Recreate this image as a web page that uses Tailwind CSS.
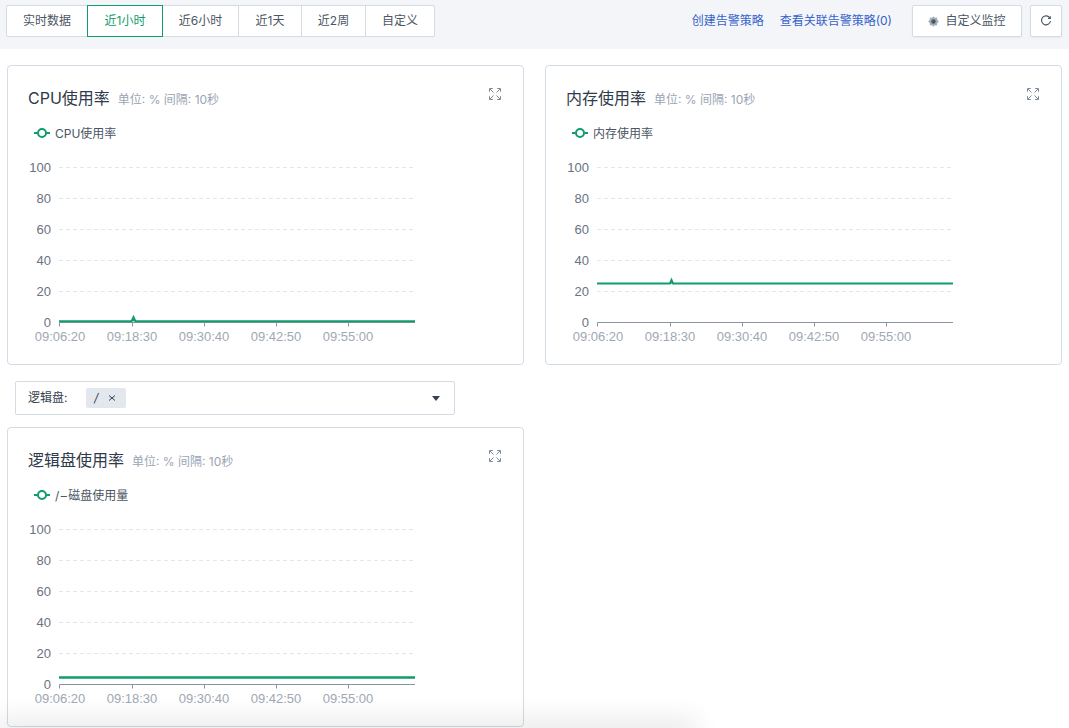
<!DOCTYPE html>
<html lang="zh">
  <head>
    <meta charset="utf-8" />
    <title>监控</title>
    <script src="https://cdn.jsdelivr.net/npm/@tailwindcss/browser@4"></script>
  </head>
  <body class="relative h-[728px] overflow-hidden bg-white text-[12px] text-[#4b5563] font-['Inter','Noto_Sans_CJK_SC',sans-serif]">
    <!-- toolbar -->
    <header class="flex h-[49px] items-start justify-between bg-[#f3f5f9] pl-[6px] pr-[7px] pt-[5px]">
      <div class="flex h-[32px] rounded-[2px] border border-[#d3dbe5] bg-white">
        <button class="w-[81px] border-r border-[#d3dbe5]">实时数据</button>
        <button class="-my-px -ml-px h-[32px] w-[76px] border border-[#0f9d6b] text-[#0f9d6b]">近1小时</button>
        <button class="w-[76px] border-r border-[#d3dbe5]">近6小时</button>
        <button class="w-[63px] border-r border-[#d3dbe5]">近1天</button>
        <button class="w-[64px] border-r border-[#d3dbe5]">近2周</button>
        <button class="w-[68px]">自定义</button>
      </div>
      <div class="flex h-[32px] items-center">
        <a class="text-[#3563c9]">创建告警策略</a>
        <a class="ml-[16px] text-[#3563c9]">查看关联告警策略(0)</a>
        <button class="ml-[20px] flex h-[32px] w-[110px] items-center justify-center gap-[6px] rounded-[2px] border border-[#d3dbe5] bg-white shadow-[0_1px_2px_rgba(0,0,0,0.05)]">
          <svg width="11" height="11" viewBox="0 0 10 10">
            <path d="M5 .2 6.300 1.500 8.200 1.400 8.400 3.300 9.800 5 8.400 6.700 8.200 8.600 6.300 8.500 5 9.800 3.700 8.500 1.800 8.600 1.600 6.700 .2 5 1.600 3.300 1.800 1.400 3.700 1.500Z" fill="#a3aebb" />
            <circle cx="5" cy="5" r="2" fill="#4b5563" />
          </svg>
          自定义监控
        </button>
        <button class="ml-[8px] flex h-[32px] w-[32px] items-center justify-center rounded-[2px] border border-[#d3dbe5] bg-white shadow-[0_1px_2px_rgba(0,0,0,0.05)]">
          <svg width="12" height="12" viewBox="0 0 12 12" fill="none" stroke="#4b5563" stroke-width="1.1">
            <path d="M10 3.200A4.500 4.500 0 1 0 10.500 6" />
            <path d="M10.300 1.200v2.300H8" />
          </svg>
        </button>
      </div>
    </header>

    <main class="grid grid-cols-[517px_517px] gap-x-[21px] px-[7px] pt-[16px]">
      <!-- CPU -->
      <section class="relative h-[300px] rounded-[4px] border border-[#d3dbe5] pl-[20px] pt-[22px]">
        <div class="flex h-[20px] items-center">
          <h2 class="text-[16px] text-[#2f3a4a]">CPU使用率</h2>
          <span class="ml-[8px] mt-[4px] text-[#9aa5b4]">单位: % 间隔: 10秒</span>
        </div>
        <svg class="absolute right-[22px] top-[22px]" width="12" height="12" viewBox="0 0 12 12" fill="none" stroke="#7f8b9a">
          <path d="M1 1 4.500 4.500M7.500 4.500 11 1M1 11 4.500 7.500M11 11 7.500 7.500" />
          <path d="M.5 3.800V.5h3.300M8.200 .5h3.300v3.300M.5 8.200v3.300h3.300M8.200 11.500h3.300V8.200" />
        </svg>
        <div class="ml-[6px] mt-[15px] flex h-[20px] items-center gap-[5px]">
          <svg width="16" height="10" viewBox="0 0 16 10" fill="none" stroke="#0f9d6b" stroke-width="2">
            <path d="M0 5h3.500M12.500 5H16" />
            <circle cx="8" cy="5" r="4" />
          </svg>
          <span class="pt-[2px]">CPU使用率</span>
        </div>
        <svg class="absolute left-0 top-[89px]" width="515" height="200" viewBox="8 155 515 200" font-size="13" font-family="Liberation Sans, sans-serif">
          <g stroke="#e1e7ef" stroke-dasharray="4 3">
            <path d="M59 167.500H415M59 198.500H415M59 229.500H415M59 260.500H415M59 291.500H415" />
          </g>
          <path d="M59.500 322.500H415M59.500 322.500v4M132.500 322.500v4M204.500 322.500v4M276.500 322.500v4M348.500 322.500v4" stroke="#8a94a3" fill="none" />
          <g fill="#6b7280" text-anchor="end">
            <text x="51" y="172">100</text><text x="51" y="203">80</text><text x="51" y="234">60</text>
            <text x="51" y="265">40</text><text x="51" y="296">20</text><text x="51" y="327">0</text>
          </g>
          <g fill="#a0a8b4" text-anchor="middle">
            <text x="60" y="341">09:06:20</text><text x="132" y="341">09:18:30</text><text x="204" y="341">09:30:40</text>
            <text x="276" y="341">09:42:50</text><text x="348" y="341">09:55:00</text>
          </g>
          <path d="M59 321.300H131.500L133.500 317 135.500 321.300H415" stroke="#0f9d6b" stroke-width="2" fill="#0f9d6b" />
        </svg>
      </section>

      <!-- memory -->
      <section class="relative h-[300px] rounded-[4px] border border-[#d3dbe5] pl-[20px] pt-[22px]">
        <div class="flex h-[20px] items-center">
          <h2 class="text-[16px] text-[#2f3a4a]">内存使用率</h2>
          <span class="ml-[8px] mt-[4px] text-[#9aa5b4]">单位: % 间隔: 10秒</span>
        </div>
        <svg class="absolute right-[22px] top-[22px]" width="12" height="12" viewBox="0 0 12 12" fill="none" stroke="#7f8b9a">
          <path d="M1 1 4.500 4.500M7.500 4.500 11 1M1 11 4.500 7.500M11 11 7.500 7.500" />
          <path d="M.5 3.800V.5h3.300M8.200 .5h3.300v3.300M.5 8.200v3.300h3.300M8.200 11.500h3.300V8.200" />
        </svg>
        <div class="ml-[6px] mt-[15px] flex h-[20px] items-center gap-[5px]">
          <svg width="16" height="10" viewBox="0 0 16 10" fill="none" stroke="#0f9d6b" stroke-width="2">
            <path d="M0 5h3.500M12.500 5H16" />
            <circle cx="8" cy="5" r="4" />
          </svg>
          <span class="pt-[2px]">内存使用率</span>
        </div>
        <svg class="absolute left-0 top-[89px]" width="515" height="200" viewBox="8 155 515 200" font-size="13" font-family="Liberation Sans, sans-serif">
          <g stroke="#e1e7ef" stroke-dasharray="4 3">
            <path d="M59 167.500H415M59 198.500H415M59 229.500H415M59 260.500H415M59 291.500H415" />
          </g>
          <path d="M59.500 322.500H415M59.500 322.500v4M132.500 322.500v4M204.500 322.500v4M276.500 322.500v4M348.500 322.500v4" stroke="#8a94a3" fill="none" />
          <g fill="#6b7280" text-anchor="end">
            <text x="51" y="172">100</text><text x="51" y="203">80</text><text x="51" y="234">60</text>
            <text x="51" y="265">40</text><text x="51" y="296">20</text><text x="51" y="327">0</text>
          </g>
          <g fill="#a0a8b4" text-anchor="middle">
            <text x="60" y="341">09:06:20</text><text x="132" y="341">09:18:30</text><text x="204" y="341">09:30:40</text>
            <text x="276" y="341">09:42:50</text><text x="348" y="341">09:55:00</text>
          </g>
          <path d="M59 283.500H132L133.500 280 135 283.500H415" stroke="#0f9d6b" stroke-width="2" fill="#0f9d6b" />
        </svg>
      </section>

      <!-- disk selector -->
      <div class="col-span-2 my-[16px] ml-[8px] mb-[12px] flex h-[34px] w-[440px] items-center rounded-[2px] border border-[#d3dbe5] pl-[12px] pr-[14px]">
        <span class="w-[58px] text-[#374151]">逻辑盘:</span>
        <span class="flex h-[20px] w-[40px] items-center rounded-[2px] bg-[#e3e8ef] pl-[8px] text-[#374151]">
          <span class="italic">/</span>
          <svg class="ml-[10px]" width="8" height="8" viewBox="0 0 8 8" stroke="#374151"><path d="M1 1.500 7 6.500M7 1.500 1 6.500" /></svg>
        </span>
        <svg class="ml-auto" width="8" height="5" viewBox="0 0 8 5"><path d="M0 0H8L4 5Z" fill="#374151" /></svg>
      </div>

      <!-- disk -->
      <section class="relative h-[300px] rounded-[4px] border border-[#d3dbe5] pl-[20px] pt-[22px]">
        <div class="flex h-[20px] items-center">
          <h2 class="text-[16px] text-[#2f3a4a]">逻辑盘使用率</h2>
          <span class="ml-[8px] mt-[4px] text-[#9aa5b4]">单位: % 间隔: 10秒</span>
        </div>
        <svg class="absolute right-[22px] top-[22px]" width="12" height="12" viewBox="0 0 12 12" fill="none" stroke="#7f8b9a">
          <path d="M1 1 4.500 4.500M7.500 4.500 11 1M1 11 4.500 7.500M11 11 7.500 7.500" />
          <path d="M.5 3.800V.5h3.300M8.200 .5h3.300v3.300M.5 8.200v3.300h3.300M8.200 11.500h3.300V8.200" />
        </svg>
        <div class="ml-[6px] mt-[15px] flex h-[20px] items-center gap-[5px]">
          <svg width="16" height="10" viewBox="0 0 16 10" fill="none" stroke="#0f9d6b" stroke-width="2">
            <path d="M0 5h3.500M12.500 5H16" />
            <circle cx="8" cy="5" r="4" />
          </svg>
          <span class="pt-[2px]"><span class="tracking-[1.500px]">/–</span>磁盘使用量</span>
        </div>
        <svg class="absolute left-0 top-[89px]" width="515" height="200" viewBox="8 155 515 200" font-size="13" font-family="Liberation Sans, sans-serif">
          <g stroke="#e1e7ef" stroke-dasharray="4 3">
            <path d="M59 167.500H415M59 198.500H415M59 229.500H415M59 260.500H415M59 291.500H415" />
          </g>
          <path d="M59.500 322.500H415M59.500 322.500v4M132.500 322.500v4M204.500 322.500v4M276.500 322.500v4M348.500 322.500v4" stroke="#8a94a3" fill="none" />
          <g fill="#6b7280" text-anchor="end">
            <text x="51" y="172">100</text><text x="51" y="203">80</text><text x="51" y="234">60</text>
            <text x="51" y="265">40</text><text x="51" y="296">20</text><text x="51" y="327">0</text>
          </g>
          <g fill="#a0a8b4" text-anchor="middle">
            <text x="60" y="341">09:06:20</text><text x="132" y="341">09:18:30</text><text x="204" y="341">09:30:40</text>
            <text x="276" y="341">09:42:50</text><text x="348" y="341">09:55:00</text>
          </g>
          <path d="M59 315.500H415" stroke="#0f9d6b" stroke-width="2.500" fill="none" />
        </svg>
      </section>
    </main>

    <!-- soft shadow rising from the bottom edge -->
    <div class="pointer-events-none absolute bottom-[-6px] left-0 h-[6px] w-[690px] shadow-[0_0_28px_6px_rgba(0,0,0,0.12)]"></div>
  </body>
</html>
